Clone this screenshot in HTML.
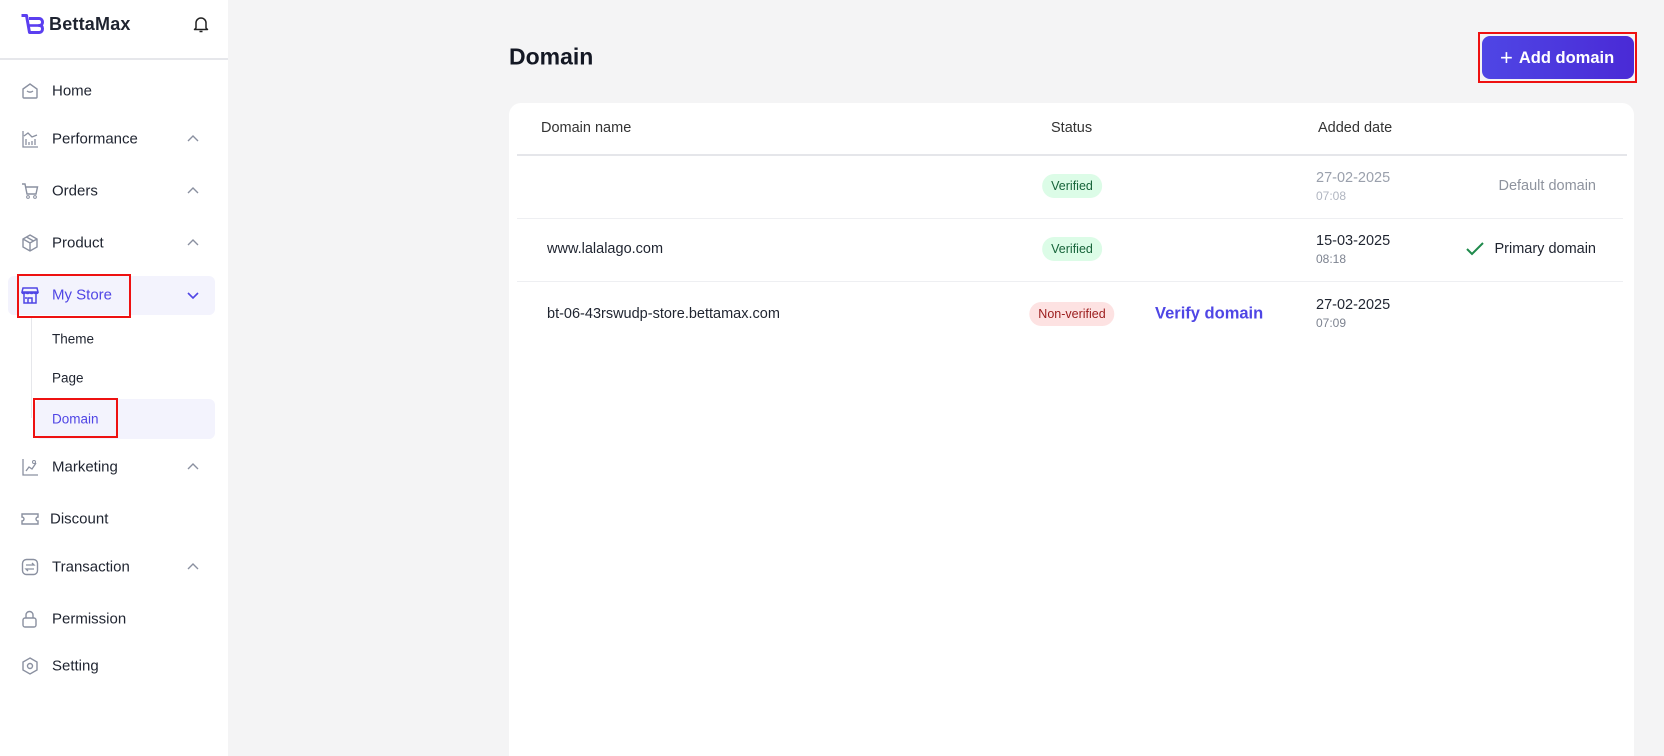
<!DOCTYPE html>
<html><head><style>
*{box-sizing:border-box;margin:0;padding:0}
html{width:1664px;height:756px;overflow:hidden}
body{width:1664px;height:756px;overflow:hidden;background:#f4f4f5;font-family:"Liberation Sans",sans-serif;color:#1f2430;position:relative}
.sb{position:absolute;left:0;top:0;width:228px;height:756px;background:#fff}
.hl{position:absolute;left:0;top:58px;width:228px;height:2px;background:#e6e7eb}
.abs{position:absolute}
.mi{position:absolute;left:52px;font-size:15px;color:#1f2430;transform:translateY(-50%)}
.ic{position:absolute;left:21px;width:18px;height:18px;transform:translateY(-50%)}
.ch{position:absolute;left:186px;width:14px;height:14px;transform:translateY(-50%)}
.sub{position:absolute;left:52px;font-size:13.5px;transform:translateY(-50%)}
.red{position:absolute;border:2px solid #ee1111}
.card{position:absolute;left:509px;top:103px;width:1125px;height:653px;background:#fff;border-radius:12px 12px 0 0}
.t{position:absolute;transform:translateY(-50%);font-size:14.5px;white-space:nowrap}
.badge{position:absolute;transform:translate(-50%,-50%);font-size:12.5px;padding:5px 9px;border-radius:12px;white-space:nowrap}
.g{background:#dcfce7;color:#17643a}
.r{background:#fde2e2;color:#9b1c1c}
</style></head><body>
<div class="sb">
 <svg class="abs" style="left:20px;top:14px" width="24" height="21" viewBox="0 0 24 21"><path d="M1.5 1.5h5l3 17h9.5c2.2 0 3.5-1.6 3.5-3.8s-1.2-3.2-3.2-3.2c2 0 3.2-1.2 3.2-3.2s-1.3-3.8-3.5-3.8H9" fill="none" stroke="#5b3ff0" stroke-width="3" stroke-linejoin="round"/><path d="M8.5 11.5h11" stroke="#5b3ff0" stroke-width="2.6"/></svg>
 <div class="abs" style="left:49px;top:14px;font-size:18px;font-weight:bold;color:#1f2430;letter-spacing:0.2px">BettaMax</div>
 <svg class="abs" style="left:193px;top:15px" width="16" height="18" viewBox="0 0 16 18"><path d="M3 13V8a5 5 0 0 1 10 0v5l1.5 1.5h-13z" fill="none" stroke="#222" stroke-width="1.5" stroke-linejoin="round"/><path d="M6.5 16.5h3" stroke="#222" stroke-width="1.5"/></svg>
 <div class="hl"></div>

 <svg class="ic" style="top:91px" viewBox="0 0 18 18"><path d="M2 7l7-5 7 5v8a1 1 0 0 1-1 1H3a1 1 0 0 1-1-1z" fill="none" stroke="#8a90a0" stroke-width="1.4"/><path d="M6 9c2 1.5 4 1.5 6 0" fill="none" stroke="#8a90a0" stroke-width="1.4"/></svg>
 <div class="mi" style="top:91px">Home</div>
 <svg class="ic" style="top:139px" viewBox="0 0 18 18"><path d="M2 1v16h15M5 15V9M8 15v-3M11 15v-4M14 15v-6M3 6l4-3 4 4 5-2" fill="none" stroke="#8a90a0" stroke-width="1.3"/></svg>
 <div class="mi" style="top:139px">Performance</div>
 <svg class="ic" style="top:191px" viewBox="0 0 18 18"><path d="M1 2h3l2 10h9l1.5-7H5" fill="none" stroke="#8a90a0" stroke-width="1.4"/><circle cx="7" cy="15" r="1.4" fill="none" stroke="#8a90a0"/><circle cx="14" cy="15" r="1.4" fill="none" stroke="#8a90a0"/></svg>
 <div class="mi" style="top:191px">Orders</div>
 <svg class="ic" style="top:243px" viewBox="0 0 18 18"><path d="M9 1l7 4v8l-7 4-7-4V5zM2 5l7 4 7-4M9 9v8M5.5 3l7 4" fill="none" stroke="#8a90a0" stroke-width="1.4"/></svg>
 <div class="mi" style="top:243px">Product</div>

 <div class="abs" style="left:8px;top:276px;width:207px;height:39px;background:#f3f3fd;border-radius:6px"></div>
 <svg class="ic" style="top:295px" viewBox="0 0 18 18"><path d="M2 2h14l1 4H1zM1 6c0 2 3 2 4 0 0 2 3 2 4 0 0 2 3 2 4 0 0 2 4 2 4 0M3 8v9h12V8M7 17v-5h4v5M5 11v2" fill="none" stroke="#5046e5" stroke-width="1.5"/></svg>
 <div class="mi" style="top:295px;color:#5046e5">My Store</div>
 <div class="red" style="left:17px;top:274px;width:114px;height:44px"></div>

 <div class="abs" style="left:31px;top:318px;width:1px;height:100px;background:#e6e7eb"></div>
 <div class="sub" style="top:339px">Theme</div>
 <div class="sub" style="top:378px">Page</div>
 <div class="abs" style="left:35px;top:399px;width:180px;height:40px;background:#f3f3fd;border-radius:6px"></div>
 <div class="sub" style="top:419px;color:#5046e5">Domain</div>
 <div class="red" style="left:33px;top:398px;width:85px;height:40px"></div>

 <svg class="ic" style="top:467px" viewBox="0 0 18 18"><path d="M2 1v16h15M5 13l3-4 3 2 4-6" fill="none" stroke="#8a90a0" stroke-width="1.3"/><circle cx="13" cy="4" r="1.5" fill="none" stroke="#8a90a0"/></svg>
 <div class="mi" style="top:467px">Marketing</div>
 <svg class="ic" style="top:519px" viewBox="0 0 18 18"><path d="M1 4h16v3a2 2 0 0 0 0 4v3H1v-3a2 2 0 0 0 0-4z" fill="none" stroke="#8a90a0" stroke-width="1.4"/></svg>
 <div class="mi" style="top:519px;left:50px">Discount</div>
 <svg class="ic" style="top:567px" viewBox="0 0 18 18"><rect x="1.5" y="1.5" width="15" height="15" rx="4" fill="none" stroke="#8a90a0" stroke-width="1.4"/><path d="M5 7h8l-2-2M13 11H5l2 2" fill="none" stroke="#8a90a0" stroke-width="1.3"/></svg>
 <div class="mi" style="top:567px">Transaction</div>
 <svg class="ic" style="top:619px" viewBox="0 0 18 18"><rect x="2" y="8" width="13" height="9" rx="2" fill="none" stroke="#8a90a0" stroke-width="1.4"/><path d="M5 8V5a3.5 3.5 0 0 1 7 0v3" fill="none" stroke="#8a90a0" stroke-width="1.4"/></svg>
 <div class="mi" style="top:619px">Permission</div>
 <svg class="ic" style="top:666px" viewBox="0 0 18 18"><path d="M9 1l7 4v8l-7 4-7-4V5z" fill="none" stroke="#8a90a0" stroke-width="1.4"/><circle cx="9" cy="9" r="2.5" fill="none" stroke="#8a90a0" stroke-width="1.4"/></svg>
 <div class="mi" style="top:666px">Setting</div>

 <svg class="ch" style="top:139px" viewBox="0 0 14 14"><path d="M2 9l5-5 5 5" fill="none" stroke="#8a90a0" stroke-width="1.4"/></svg>
 <svg class="ch" style="top:191px" viewBox="0 0 14 14"><path d="M2 9l5-5 5 5" fill="none" stroke="#8a90a0" stroke-width="1.4"/></svg>
 <svg class="ch" style="top:243px" viewBox="0 0 14 14"><path d="M2 9l5-5 5 5" fill="none" stroke="#8a90a0" stroke-width="1.4"/></svg>
 <svg class="ch" style="top:295px" viewBox="0 0 14 14"><path d="M2 5l5 5 5-5" fill="none" stroke="#5046e5" stroke-width="1.6"/></svg>
 <svg class="ch" style="top:467px" viewBox="0 0 14 14"><path d="M2 9l5-5 5 5" fill="none" stroke="#8a90a0" stroke-width="1.4"/></svg>
 <svg class="ch" style="top:567px" viewBox="0 0 14 14"><path d="M2 9l5-5 5 5" fill="none" stroke="#8a90a0" stroke-width="1.4"/></svg>
</div>

<div class="t" style="left:509px;top:57px;font-size:23px;font-weight:bold;color:#141824">Domain</div>
<div class="abs" style="left:1482px;top:36px;width:152px;height:43px;border-radius:8px;background:linear-gradient(90deg,#4f46e5,#4a2ad6);color:#fff;font-weight:bold;font-size:16.5px;line-height:43px;padding-left:18px">
 <span style="font-weight:normal;font-size:22px;vertical-align:-2px;margin-right:6px">+</span>Add domain</div>
<div class="red" style="left:1478px;top:32px;width:159px;height:51px"></div>

<div class="card">
 <div class="t" style="left:32px;top:25px;color:#333">Domain name</div>
 <div class="t" style="left:542px;top:25px;color:#333">Status</div>
 <div class="t" style="left:809px;top:25px;color:#333">Added date</div>
 <div class="abs" style="left:8px;top:51px;width:1110px;height:2px;background:#e5e6ea"></div>

 <div class="badge g" style="left:563px;top:83px">Verified</div>
 <div class="t" style="left:807px;top:75px;color:#9aa0ac">27-02-2025</div>
 <div class="t" style="left:807px;top:93px;color:#b0b5c0;font-size:12px">07:08</div>
 <div class="t" style="right:38px;top:83px;color:#8e939e">Default domain</div>
 <div class="abs" style="left:8px;top:115px;width:1106px;height:1px;background:#eeeff2"></div>

 <div class="t" style="left:38px;top:146px">www.lalalago.com</div>
 <div class="badge g" style="left:563px;top:146px">Verified</div>
 <div class="t" style="left:807px;top:138px">15-03-2025</div>
 <div class="t" style="left:807px;top:156px;color:#7d8390;font-size:12px">08:18</div>
 <svg class="abs" style="left:957px;top:139px" width="18" height="14" viewBox="0 0 18 14"><path d="M1 7l5 5L17 1" fill="none" stroke="#1f8a4c" stroke-width="2"/></svg>
 <div class="t" style="right:38px;top:146px">Primary domain</div>
 <div class="abs" style="left:8px;top:178px;width:1106px;height:1px;background:#eeeff2"></div>

 <div class="t" style="left:38px;top:211px">bt-06-43rswudp-store.bettamax.com</div>
 <div class="badge r" style="left:563px;top:211px">Non-verified</div>
 <div class="t" style="left:646px;top:211px;color:#4f46e5;font-weight:bold;font-size:16.5px">Verify domain</div>
 <div class="t" style="left:807px;top:202px">27-02-2025</div>
 <div class="t" style="left:807px;top:220px;color:#7d8390;font-size:12px">07:09</div>
</div>
</body></html>
